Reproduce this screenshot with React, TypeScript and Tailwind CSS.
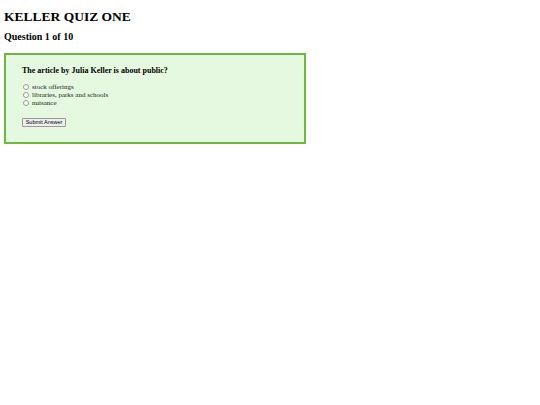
export default function App() {
  const options = ['stock offerings', 'libraries, parks and schools', 'nuisance'];
  return (
    <div className="px-[4px] pt-[9px] text-black" style={{ fontFamily: '"Liberation Serif", "Times New Roman", serif' }}>
      <h1 className="text-[13.5px] font-bold leading-[16px]">KELLER QUIZ ONE</h1>
      <h2 className="mt-[6px] text-[10px] font-bold leading-[12px]">Question 1 of 10</h2>
      <div className="mt-[10px] w-[302px] h-[91px] border-2 border-[#6cb840] bg-[#e5f9e0] pl-[16px] pt-[11px]">
        <p className="text-[8px] font-bold leading-[10px]">The article by Julia Keller is about public?</p>
        <div className="mt-[7px] flex flex-col">
          {options.map((o) => (
            <label key={o} className="flex items-center gap-[3px] text-[7px] leading-[8px] text-[#222]">
              <span className="ml-[1px] inline-block w-[6px] h-[6px] rounded-full border border-[#999] bg-white" />
              {o}
            </label>
          ))}
        </div>
        <button
          className="mt-[9px] h-[9px] w-[44px] border border-[#999] rounded-[1px] bg-[#efefef] text-[5.5px] leading-[7px] text-black"
          style={{ fontFamily: '"Liberation Sans", Arial, sans-serif' }}
        >
          Submit Answer
        </button>
      </div>
    </div>
  );
}
